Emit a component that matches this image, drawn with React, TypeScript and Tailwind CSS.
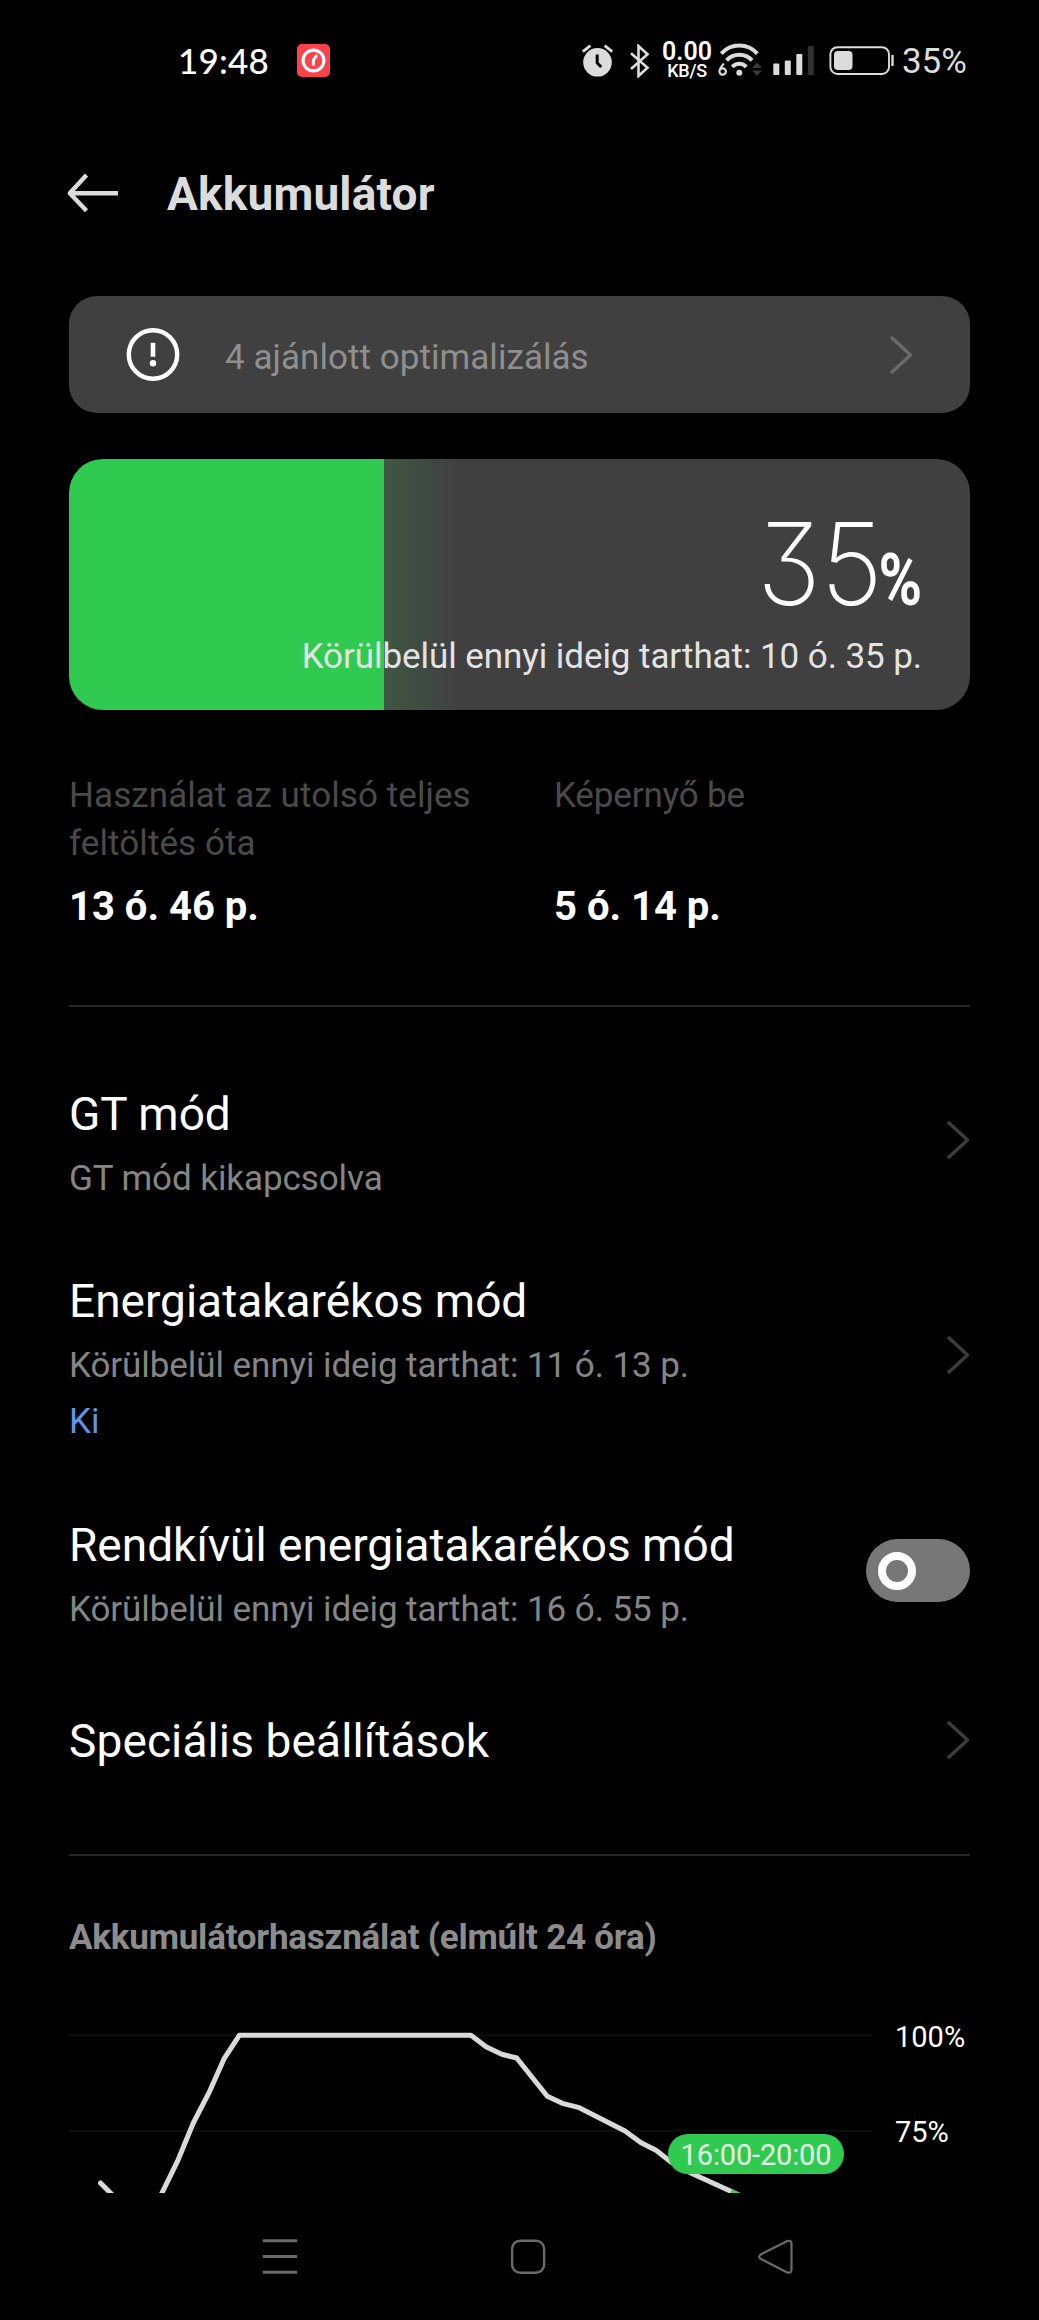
import React from "react";

const LEVEL_POINTS =
  "177.3,2161.7 193.3,2123 209,2092.7 224.3,2058.3 239.3,2035.3 471,2035.3 486,2046.7 501.7,2054.3 516.7,2058 547.3,2096.3 562.3,2103.3 579.3,2107.7 625,2131 641,2142.7 656,2150.3 671,2162 693,2174 732.5,2192";

function StatusBar() {
  return (
    <header className="flex h-[120px] shrink-0 items-start text-[#dcdcdc]">
      <span className="ml-[178px] mt-[40px] w-[119px] shrink-0 whitespace-nowrap font-['Lato'] text-[35px] font-medium leading-[40px] tracking-[0.2px] text-white">
        19:48
      </span>
      <svg className="mt-[44px] h-[33px] w-[33px] shrink-0" viewBox="0 0 33 33" fill="none">
        <rect width="33" height="33" rx="5" fill="#fa434a" />
        <circle cx="16.5" cy="16.5" r="10.4" stroke="#fff" strokeWidth="3.2" />
        <path d="M16.4 20.3v-4l2.8-4.3" stroke="#fff" strokeWidth="3" strokeLinecap="round" />
      </svg>
      <svg className="ml-[251px] mt-[44px] h-[34px] w-[33px] shrink-0" viewBox="0 0 33 34" fill="none">
        <circle cx="16.5" cy="18.3" r="14.3" fill="currentColor" />
        <path d="M1.8 7.6l7.6-6M31.2 7.6l-7.6-6" stroke="currentColor" strokeWidth="2.8" />
        <path d="M16.2 10.5v8.5l4 4" stroke="#000" strokeWidth="3" />
      </svg>
      <svg className="ml-[15px] mt-[44px] h-[34px] w-[22px] shrink-0" viewBox="0 0 22 34" fill="none">
        <path d="M2 9.3l16.5 14.5L9.5 32V2l9 8.2L2 25" stroke="currentColor" strokeWidth="2.6" />
      </svg>
      <div className="ml-[9px] mt-[41px] flex w-[54px] shrink-0 flex-col items-center whitespace-nowrap text-white">
        <span className="text-[25px] font-semibold leading-[22px]">0.00</span>
        <span className="text-[18px] font-medium leading-[16px] tracking-[-0.3px]">KB/S</span>
      </div>
      <svg className="ml-[4px] mt-[42px] h-[36px] w-[46px] shrink-0" viewBox="0 0 46 36" fill="none">
        <path d="M3.3 11.6a24 24 0 0 1 36 0" stroke="currentColor" strokeWidth="4" />
        <path d="M8.6 18.4a17 17 0 0 1 25.4 0" stroke="currentColor" strokeWidth="4" />
        <path d="M14.3 24.8a9.4 9.4 0 0 1 14 0" stroke="currentColor" strokeWidth="4" />
        <circle cx="21.3" cy="30.7" r="3" fill="currentColor" />
        <path d="M5.8 21.5c-2 2.4-4.3 5-4.3 8a3.2 3.2 0 1 0 1-2.3" stroke="currentColor" strokeWidth="2.2" />
        <path d="M34 26l5-5.6 5 5.6zM34 28.4l5 5.4 5-5.4z" fill="#3a3a3a" />
      </svg>
      <svg className="ml-[9px] mt-[46px] h-[29px] w-[42px] shrink-0" viewBox="0 0 42 29" fill="currentColor">
        <rect x="0.3" y="17.5" width="6" height="11.5" rx="1" />
        <rect x="11.8" y="14.5" width="6" height="14.5" rx="1" />
        <rect x="23.3" y="8" width="6" height="21" rx="1" />
        <rect x="34.8" y="0" width="6" height="29" rx="1" fill="#303030" />
      </svg>
      <svg className="ml-[14px] mt-[46px] h-[29px] w-[66px] shrink-0" viewBox="0 0 66 29" fill="none">
        <rect x="1.4" y="1.2" width="58.6" height="26.8" rx="7" stroke="currentColor" strokeWidth="1.9" />
        <rect x="5" y="5" width="18.5" height="19" rx="4" fill="currentColor" />
        <path d="M63.5 9v11" stroke="currentColor" strokeWidth="2.4" />
      </svg>
      <span className="ml-[7px] mt-[41px] whitespace-nowrap text-[35px] font-[450] leading-[42px] tracking-[-0.1px]">35%</span>
    </header>
  );
}

function Chevron({ className }: { className: string }) {
  return (
    <svg className={className} viewBox="0 0 24 40" fill="none">
      <path d="M2 2l19.5 18L2 38" stroke="currentColor" strokeWidth="3.4" strokeLinejoin="round" />
    </svg>
  );
}

function Row({
  title,
  detail,
  state,
  className,
  children,
}: {
  title: string;
  detail?: string;
  state?: string;
  className: string;
  children: React.ReactNode;
}) {
  return (
    <div className={className}>
      <div className="flex flex-col whitespace-nowrap">
        <span className="text-[46px] leading-[58px]">{title}</span>
        {detail && (
          <span className="mt-[12px] text-[35px] leading-[48px] tracking-[-0.08px] text-[#858585]">{detail}</span>
        )}
        {state && <span className="mt-[8px] text-[35px] leading-[48px] text-[#6095e8]">{state}</span>}
      </div>
      {children}
    </div>
  );
}

const chevronClass = "h-[40px] w-[24px] shrink-0 text-[#3c3c3c]";

export default function App() {
  return (
    <div className="flex h-[2320px] w-[1039px] flex-col overflow-hidden bg-black font-['Roboto',sans-serif] text-white">
      <StatusBar />

      <div className="flex h-[176px] shrink-0 items-start text-[#dcdcdc]">
        <svg className="ml-[66px] mt-[53px] h-[40px] w-[54px]" viewBox="0 0 54 40" fill="none">
          <path d="M52 20.3H4M20.5 2L3.8 20.3l16.7 17.4" stroke="currentColor" strokeWidth="4.4" strokeLinejoin="round" />
        </svg>
        <h1 className="ml-[47px] mt-[44px] whitespace-nowrap text-[46px] font-bold leading-[60px] tracking-[0.15px]">Akkumulátor</h1>
      </div>

      <div className="mx-[69px] flex h-[117px] shrink-0 items-center rounded-[28px] bg-[#404040]">
        <svg className="ml-[57px] h-[54px] w-[54px]" viewBox="0 0 54 54" fill="none">
          <circle cx="27" cy="26.5" r="24.2" stroke="#fff" strokeWidth="4.4" />
          <path d="M27 14.8v14" stroke="#fff" strokeWidth="4.6" />
          <circle cx="27" cy="35.2" r="3.2" fill="#fff" />
        </svg>
        <span className="ml-[45px] mt-[6px] grow whitespace-nowrap text-[35px] leading-[48px] tracking-[0.05px] text-[#8f8f8f]">
          4 ajánlott optimalizálás
        </span>
        <Chevron className="mr-[57px] h-[40px] w-[24px] text-[#6b6b6b]" />
      </div>

      <div className="mx-[69px] mt-[46px] h-[251px] shrink-0 overflow-hidden rounded-[34px] bg-[linear-gradient(to_right,#30ca50_0,#30ca50_315.5px,#3f5642_315.5px,#404040_390px)]">
        <div className="flex flex-col items-end pr-[48px]">
          <div className="mt-[44px] flex h-[121px] items-baseline">
            <span className="-mr-[14px] origin-right scale-x-[0.94] whitespace-nowrap font-['Inter'] text-[114px] font-[240] leading-[121px] [font-feature-settings:'cv09']">
              35
            </span>
            <span className="origin-right scale-x-[0.82] text-[72px] font-bold leading-[72px]">%</span>
          </div>
          <span className="mt-[9px] whitespace-nowrap text-[35px] leading-[48px] tracking-[-0.07px] text-[#e3e3e3]">
            Körülbelül ennyi ideig tarthat: 10 ó. 35 p.
          </span>
        </div>
      </div>

      <div className="mx-[69px] mt-[62px] flex h-[233px] shrink-0">
        <div className="flex w-[485px] flex-col">
          <p className="h-[95px] w-[420px] text-[35px] leading-[47.5px] tracking-[0.08px] text-[#4a4a4a]">
            Használat az utolsó teljes feltöltés óta
          </p>
          <span className="mt-[15px] text-[40px] font-bold leading-[50px]">13 ó. 46 p.</span>
        </div>
        <div className="flex flex-col">
          <p className="h-[95px] text-[35px] leading-[47.5px] tracking-[-0.15px] text-[#4a4a4a]">Képernyő be</p>
          <span className="mt-[15px] text-[40px] font-bold leading-[50px]">5 ó. 14 p.</span>
        </div>
      </div>

      <div className="mx-[69px] h-[2px] shrink-0 bg-[#262626]" />

      <div className="mx-[69px] flex h-[847px] shrink-0 flex-col">
        <Row className="mt-[78px] flex h-[187px] shrink-0 justify-between" title="GT mód" detail="GT mód kikapcsolva">
          <Chevron className={`mt-[35px] ${chevronClass}`} />
        </Row>
        <Row
          className="flex h-[244px] shrink-0 justify-between"
          title="Energiatakarékos mód"
          detail="Körülbelül ennyi ideig tarthat: 11 ó. 13 p."
          state="Ki"
        >
          <Chevron className={`mt-[63px] ${chevronClass}`} />
        </Row>
        <Row
          className="flex h-[196px] shrink-0 justify-between"
          title="Rendkívül energiatakarékos mód"
          detail="Körülbelül ennyi ideig tarthat: 16 ó. 55 p."
        >
          <div className="mt-[23px] flex h-[63px] w-[104px] items-center rounded-full bg-[#777777] pl-[12px]">
            <div className="h-[38px] w-[38px] rounded-full border-[8px] border-white" />
          </div>
        </Row>
        <Row className="flex h-[100px] shrink-0 justify-between tracking-[0.12px]" title="Speciális beállítások">
          <Chevron className={`mt-[8px] ${chevronClass}`} />
        </Row>
      </div>

      <div className="mx-[69px] h-[2px] shrink-0 bg-[#262626]" />

      <h2 className="ml-[69px] mt-[58px] h-[84px] shrink-0 whitespace-nowrap text-[35px] font-bold leading-[48px] tracking-[-0.22px] text-[#8c8c8c]">
        Akkumulátorhasználat (elmúlt 24 óra)
      </h2>

      <section className="relative flex h-[195px] shrink-0 overflow-hidden">
        <svg className="h-[195px] w-[872px] shrink-0" viewBox="0 1998 872 195" fill="none">
          <path d="M69 2035.3H872M69 2130.7H872" stroke="#0e0e0e" strokeWidth="2" />
          <path d="M100.5 2183L115 2197.5" stroke="#dadada" strokeWidth="5" strokeLinecap="round" />
          <polyline points={"160,2197 " + LEVEL_POINTS} stroke="#dadada" strokeWidth="5" strokeLinejoin="round" />
          <path d="M731 2191.3L746 2198" stroke="#4cc468" strokeWidth="5" />
        </svg>
        <div className="ml-[23px] flex flex-col text-[29px] leading-[36px]">
          <span className="mt-[21px]">100%</span>
          <span className="mt-[59px]">75%</span>
        </div>
        <div className="absolute left-[668px] top-[136px] flex h-[40px] w-[176px] items-center justify-center whitespace-nowrap rounded-full bg-[#30ca50] pt-[2px] text-[29px] leading-[36px] tracking-[-0.15px] text-[#e4f9e8]">
          16:00-20:00
        </div>
      </section>

      <nav className="flex h-[127px] shrink-0 items-start justify-between pl-[261px] pr-[244px] pt-[45px] text-[#6a6a6a]">
        <svg className="h-[38px] w-[38px]" viewBox="0 0 38 38" fill="none">
          <path d="M1.7 2.8h34.5M1.7 18.6h34.5M1.7 34.3h34.5" stroke="currentColor" strokeWidth="3" />
        </svg>
        <svg className="h-[38px] w-[38px]" viewBox="0 0 38 38" fill="none">
          <rect x="3.1" y="2.7" width="32" height="32" rx="8" stroke="currentColor" strokeWidth="2.4" />
        </svg>
        <svg className="h-[38px] w-[38px]" viewBox="0 0 38 38" fill="none">
          <path
            d="M4 16.3L29.8 3.2q4.4-1.6 4.7 2.4v26.2q-.3 4-4.7 2.4L4 21.1q-3.6-2.4 0-4.8z"
            stroke="currentColor"
            strokeWidth="2.2"
            strokeLinejoin="round"
          />
        </svg>
      </nav>
    </div>
  );
}
